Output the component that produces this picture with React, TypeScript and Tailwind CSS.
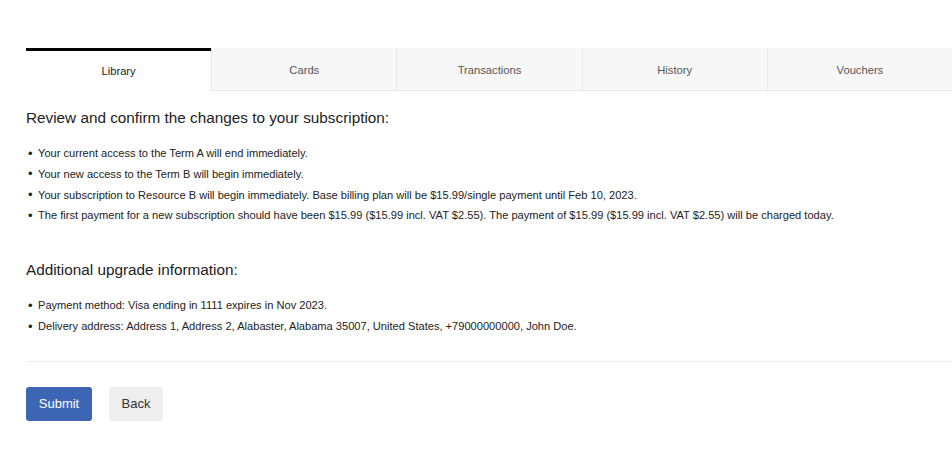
const TABS = ['Library', 'Cards', 'Transactions', 'History', 'Vouchers']

const CHANGES = [
  'Your current access to the Term A will end immediately.',
  'Your new access to the Term B will begin immediately.',
  'Your subscription to Resource B will begin immediately. Base billing plan will be $15.99/single payment until Feb 10, 2023.',
  'The first payment for a new subscription should have been $15.99 ($15.99 incl. VAT $2.55). The payment of $15.99 ($15.99 incl. VAT $2.55) will be charged today.',
]

const UPGRADE_INFO = [
  'Payment method: Visa ending in 1111 expires in Nov 2023.',
  'Delivery address: Address 1, Address 2, Alabaster, Alabama 35007, United States, +79000000000, John Doe.',
]

function BulletList({ items }: { items: string[] }) {
  return (
    <ul className="flex flex-col">
      {items.map((item) => (
        <li key={item} className="flex h-[20.8px] items-center text-[11.1px] text-[#222]">
          <span className="w-[12px] pl-[2px] text-[13px]">•</span>
          <span className="whitespace-nowrap">{item}</span>
        </li>
      ))}
    </ul>
  )
}

export default function App() {
  const active = 0
  return (
    <div className="min-h-screen overflow-hidden bg-white pl-[26px] pt-[48px] [font-family:'Liberation_Sans',Arial,sans-serif]">
      <div className="grid h-[43px] grid-cols-5">
        {TABS.map((tab, i) =>
          i === active ? (
            <div
              key={tab}
              className="flex items-center justify-center border-t-[3px] border-black bg-white text-[11.2px] text-[#222]"
            >
              {tab}
            </div>
          ) : (
            <div
              key={tab}
              className="flex items-center justify-center border-b border-l border-[#e9e9e9] bg-[#f7f7f7] pt-[3px] text-[11.2px] text-[#555]"
            >
              {tab}
            </div>
          )
        )}
      </div>

      <h2 className="mt-[15px] text-[15.3px] leading-[24px] text-[#222]">
        Review and confirm the changes to your subscription:
      </h2>
      <div className="mt-[13px]">
        <BulletList items={CHANGES} />
      </div>

      <h2 className="mt-[32px] text-[15.3px] leading-[24px] text-[#222]">
        Additional upgrade information:
      </h2>
      <div className="mt-[13px]">
        <BulletList items={UPGRADE_INFO} />
      </div>

      <hr className="mt-[24px] border-t border-[#eeeeee]" />

      <div className="mt-[25px] flex gap-[17px]">
        <button
          type="button"
          className="h-[34px] w-[66px] rounded-[3px] bg-[#3c66b4] text-[13px] text-white"
        >
          Submit
        </button>
        <button
          type="button"
          className="h-[34px] w-[54px] rounded-[3px] bg-[#eeeeee] text-[13px] text-[#333]"
        >
          Back
        </button>
      </div>
    </div>
  )
}
